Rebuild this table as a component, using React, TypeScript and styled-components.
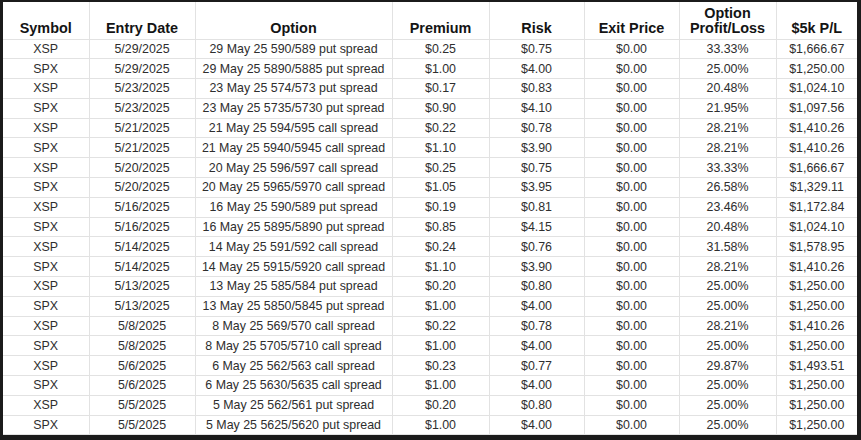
import React from "react";
import styled, { createGlobalStyle } from "styled-components";

const Global = createGlobalStyle`
  html, body { margin: 0; padding: 0; background: #1b1b1b; }
  body { font-family: "Liberation Sans", Arial, sans-serif; }
`;

const Frame = styled.div`
  width: 861px;
  height: 440px;
  box-sizing: border-box;
  padding: 2px 4px 5px 3px;
  background: #1b1b1b;
`;

const Sheet = styled.div`
  background: #fff;
  width: 854px;
  height: 433px;
  overflow: hidden;
`;

const Table = styled.table`
  border-collapse: collapse;
  table-layout: fixed;
  width: 854px;
`;

const HeadCell = styled.th`
  height: 37px;
  padding: 0 2px 3px;
  box-sizing: border-box;
  vertical-align: bottom;
  text-align: center;
  font-size: 14.4px;
  line-height: 15px;
  font-weight: bold;
  color: #141414;
  border-right: 1px solid #e2e2e2;
  border-bottom: 1px solid #e2e2e2;
  &:last-child { border-right: none; }
`;

const Row = styled.tr`
  height: 19.8px;
`;

const Cell = styled.td`
  padding: 0 2px;
  text-align: center;
  vertical-align: middle;
  font-size: 12.4px;
  line-height: 18px;
  color: #2e2e2e;
  white-space: nowrap;
  border-right: 1px solid #e2e2e2;
  border-bottom: 1px solid #e2e2e2;
  &:last-child { border-right: none; }
`;

const widths = [86, 106, 197, 97, 95, 95, 97, 81];
const headers = ["Symbol", "Entry Date", "Option", "Premium", "Risk", "Exit Price", "Option Profit/Loss", "$5k P/L"];

const rows: string[][] = [
  ["XSP", "5/29/2025", "29 May 25 590/589 put spread", "$0.25", "$0.75", "$0.00", "33.33%", "$1,666.67"],
  ["SPX", "5/29/2025", "29 May 25 5890/5885 put spread", "$1.00", "$4.00", "$0.00", "25.00%", "$1,250.00"],
  ["XSP", "5/23/2025", "23 May 25 574/573 put spread", "$0.17", "$0.83", "$0.00", "20.48%", "$1,024.10"],
  ["SPX", "5/23/2025", "23 May 25 5735/5730 put spread", "$0.90", "$4.10", "$0.00", "21.95%", "$1,097.56"],
  ["XSP", "5/21/2025", "21 May 25 594/595 call spread", "$0.22", "$0.78", "$0.00", "28.21%", "$1,410.26"],
  ["SPX", "5/21/2025", "21 May 25 5940/5945 call spread", "$1.10", "$3.90", "$0.00", "28.21%", "$1,410.26"],
  ["XSP", "5/20/2025", "20 May 25 596/597 call spread", "$0.25", "$0.75", "$0.00", "33.33%", "$1,666.67"],
  ["SPX", "5/20/2025", "20 May 25 5965/5970 call spread", "$1.05", "$3.95", "$0.00", "26.58%", "$1,329.11"],
  ["XSP", "5/16/2025", "16 May 25 590/589 put spread", "$0.19", "$0.81", "$0.00", "23.46%", "$1,172.84"],
  ["SPX", "5/16/2025", "16 May 25 5895/5890 put spread", "$0.85", "$4.15", "$0.00", "20.48%", "$1,024.10"],
  ["XSP", "5/14/2025", "14 May 25 591/592 call spread", "$0.24", "$0.76", "$0.00", "31.58%", "$1,578.95"],
  ["SPX", "5/14/2025", "14 May 25 5915/5920 call spread", "$1.10", "$3.90", "$0.00", "28.21%", "$1,410.26"],
  ["XSP", "5/13/2025", "13 May 25 585/584 put spread", "$0.20", "$0.80", "$0.00", "25.00%", "$1,250.00"],
  ["SPX", "5/13/2025", "13 May 25 5850/5845 put spread", "$1.00", "$4.00", "$0.00", "25.00%", "$1,250.00"],
  ["XSP", "5/8/2025", "8 May 25 569/570 call spread", "$0.22", "$0.78", "$0.00", "28.21%", "$1,410.26"],
  ["SPX", "5/8/2025", "8 May 25 5705/5710 call spread", "$1.00", "$4.00", "$0.00", "25.00%", "$1,250.00"],
  ["XSP", "5/6/2025", "6 May 25 562/563 call spread", "$0.23", "$0.77", "$0.00", "29.87%", "$1,493.51"],
  ["SPX", "5/6/2025", "6 May 25 5630/5635 call spread", "$1.00", "$4.00", "$0.00", "25.00%", "$1,250.00"],
  ["XSP", "5/5/2025", "5 May 25 562/561 put spread", "$0.20", "$0.80", "$0.00", "25.00%", "$1,250.00"],
  ["SPX", "5/5/2025", "5 May 25 5625/5620 put spread", "$1.00", "$4.00", "$0.00", "25.00%", "$1,250.00"],
];

export default function App() {
  return (
    <Frame>
      <Global />
      <Sheet>
        <Table>
          <colgroup>
            {widths.map((w, i) => (
              <col key={i} style={{ width: w }} />
            ))}
          </colgroup>
          <thead>
            <tr>
              {headers.map((h) => (
                <HeadCell key={h}>{h}</HeadCell>
              ))}
            </tr>
          </thead>
          <tbody>
            {rows.map((r, i) => (
              <Row key={i}>
                {r.map((c, j) => (
                  <Cell key={j}>{c}</Cell>
                ))}
              </Row>
            ))}
          </tbody>
        </Table>
      </Sheet>
    </Frame>
  );
}
